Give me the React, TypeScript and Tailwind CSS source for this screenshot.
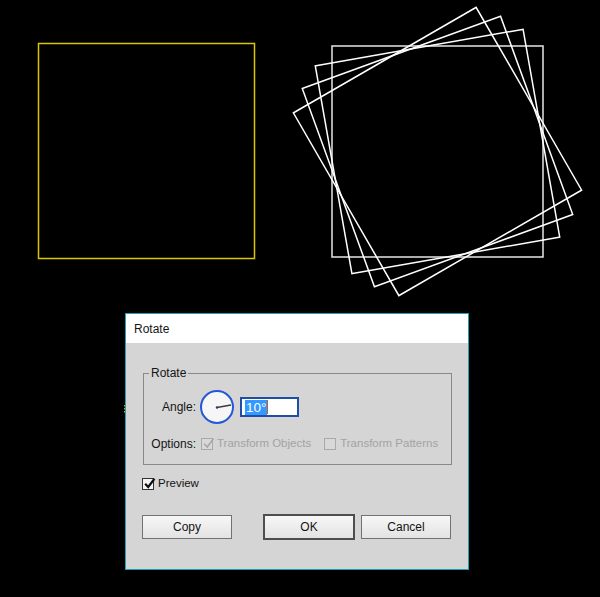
import React from "react";

function Check({ disabled, className = "" }: { disabled?: boolean; className?: string }) {
  return (
    <span
      className={`relative inline-flex h-[12px] w-[12px] shrink-0 items-center justify-center border ${
        disabled ? "border-[#a9a9a9] bg-[#d8d8d8]" : "border-[#333333] bg-[#f4f4f4]"
      } ${className}`}
    >
      <svg viewBox="0 0 12 12" className="absolute -top-[2px] left-[0px] h-[13px] w-[13px]">
        <path
          d="M2 6.2 L4.8 9.2 L10.6 1.6"
          fill="none"
          stroke={disabled ? "#a6a6a6" : "#111111"}
          strokeWidth={disabled ? 1.4 : 2}
        />
      </svg>
    </span>
  );
}

function Box({ className = "" }: { className?: string }) {
  return (
    <span
      className={`inline-block h-[12px] w-[12px] shrink-0 border border-[#a9a9a9] bg-[#d8d8d8] ${className}`}
    />
  );
}

function Button({ label, primary }: { label: string; primary?: boolean }) {
  return (
    <button
      type="button"
      className={`flex items-center justify-center bg-gradient-to-b from-[#f7f7f7] to-[#e3e3e3] text-[12px] text-[#141414] ${
        primary
          ? "h-[26px] w-[92px] border-2 border-[#4e4e4e]"
          : "h-[24px] w-[90px] border border-[#727272]"
      }`}
    >
      {label}
    </button>
  );
}

export default function App() {
  const c = { x: 437.5, y: 151.5 };
  const s = 211;
  return (
    <div className="relative h-[597px] w-[600px] overflow-hidden bg-black font-['Liberation_Sans',Arial,sans-serif]">
      {/* artboard */}
      <svg width="600" height="597" className="absolute left-0 top-0">
        <rect x="38.5" y="43.5" width="216" height="215" fill="none" stroke="#d9c600" strokeWidth="1.5" />
        <line x1="124.5" y1="405" x2="124.5" y2="413" stroke="#c9b400" strokeWidth="1" strokeDasharray="1.5 1.5" />
        {[0, -10, -20, -30].map((a) => (
          <rect
            key={a}
            x={c.x - s / 2}
            y={c.y - s / 2}
            width={s}
            height={s}
            fill="none"
            stroke={a === 0 ? "#e6e6e6" : "#ffffff"}
            strokeWidth="1.5"
            transform={`rotate(${a} ${c.x} ${c.y})`}
          />
        ))}
      </svg>

      {/* dialog window */}
      <div className="absolute left-[125px] top-[313px] flex h-[257px] w-[344px] flex-col border border-[#1aa3b6]">
        <div className="flex h-[29px] items-center bg-white pl-[8px] text-[12px] text-[#141414]">
          Rotate
        </div>
        <div className="flex flex-1 flex-col bg-[#d5d5d5] px-[16px] pt-[30px]">
          <div className="relative ml-[1px] h-[92px] border border-[#888888]">
            <span className="absolute -top-[8px] left-[5px] bg-[#d5d5d5] px-[2px] text-[12px] leading-[14px] text-[#141414]">
              Rotate
            </span>
            <div className="mt-[16px] flex h-[34px] items-center">
              <span className="w-[52px] text-right text-[12px] text-[#141414]">Angle:</span>
              <div className="relative ml-[4px] h-[34px] w-[34px] rounded-full border-2 border-[#2459d6] bg-[#f6f6f6]">
                <svg viewBox="0 0 30 30" className="absolute left-0 top-0 h-[30px] w-[30px]">
                  <line x1="15" y1="15.5" x2="29" y2="13" stroke="#3a3a3a" strokeWidth="1.3" />
                  <circle cx="15" cy="15.5" r="1.2" fill="#2a3a70" />
                </svg>
              </div>
              <div className="ml-[6px] flex h-[20px] w-[59px] items-center border-2 border-[#1c4fa6] bg-white pl-[3px]">
                <span className="bg-[#3399ff] px-[1px] text-[13.5px] leading-[15px] text-white">10°</span>
                <span className="h-[14px] w-[1px] bg-[#c0621c]" />
              </div>
            </div>
            <div className="mt-[12px] flex h-[16px] items-center text-[11.5px]">
              <span className="w-[52px] text-right text-[12px] text-[#141414]">Options:</span>
              <Check disabled className="ml-[5px]" />
              <span className="ml-[4px] text-[#a3a3a3]">Transform Objects</span>
              <Box className="ml-[13px]" />
              <span className="ml-[4px] text-[#a3a3a3]">Transform Patterns</span>
            </div>
          </div>
          <div className="mt-[12px] flex h-[14px] items-center text-[11.5px] text-[#141414]">
            <Check />
            <span className="ml-[4px]">Preview</span>
          </div>
          <div className="mt-[23px] flex items-center">
            <Button label="Copy" />
            <div className="ml-[31px]">
              <Button label="OK" primary />
            </div>
            <div className="ml-[6px]">
              <Button label="Cancel" />
            </div>
          </div>
        </div>
      </div>
    </div>
  );
}
